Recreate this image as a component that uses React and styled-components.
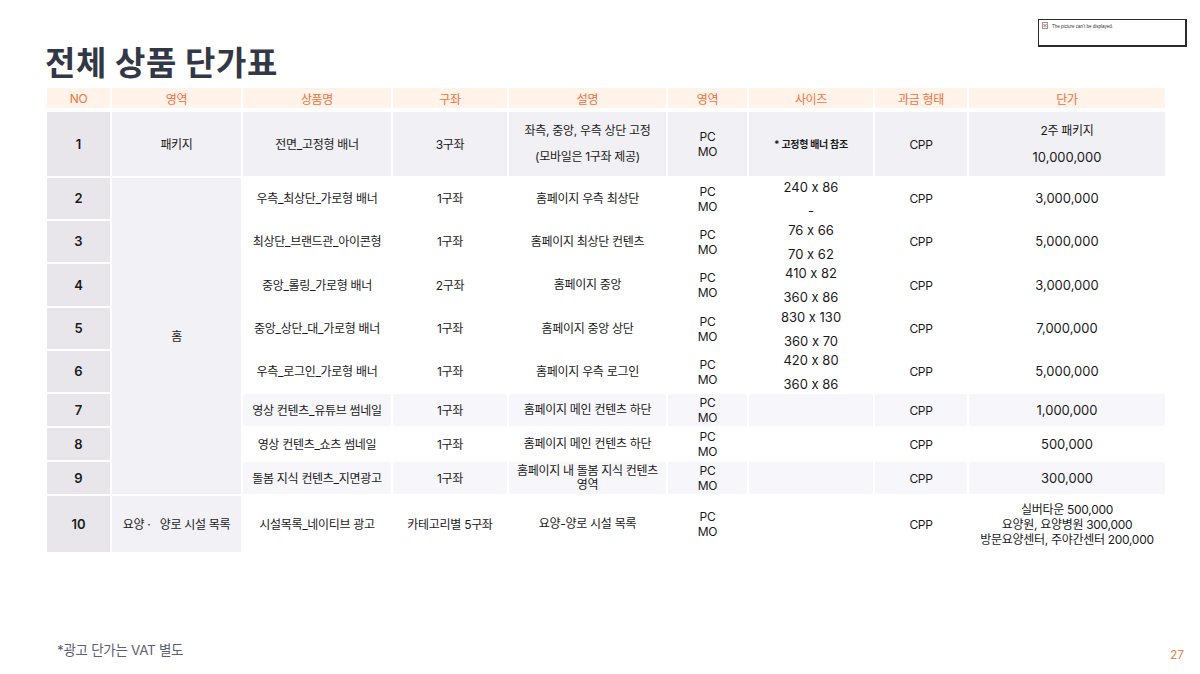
import React from "react";
import styled, { createGlobalStyle } from "styled-components";

const GlobalStyle = createGlobalStyle`
  body {
    margin: 0;
    background: #ffffff;
    font-family: "Inter", "Noto Sans CJK KR", sans-serif;
    font-feature-settings: "calt" 0;
  }
`;

const columns = ["NO", "영역", "상품명", "구좌", "설명", "영역", "사이즈", "과금 형태", "단가"];

const rows = [
  {
    no: "1",
    name: "전면_고정형 배너",
    slots: "3구좌",
    desc: ["좌측, 중앙, 우측 상단 고정", "(모바일은 1구좌 제공)"],
    note: "* 고정형 배너 참조",
    price: ["2주 패키지", "10,000,000"],
    tone: "row",
    height: 64,
  },
  { no: "2", name: "우측_최상단_가로형 배너", slots: "1구좌", desc: ["홈페이지 우측 최상단"], size: ["240 x 86", "-"], price: ["3,000,000"], height: 41 },
  { no: "3", name: "최상단_브랜드관_아이콘형", slots: "1구좌", desc: ["홈페이지 최상단 컨텐츠"], size: ["76 x 66", "70 x 62"], price: ["5,000,000"], height: 41 },
  { no: "4", name: "중앙_롤링_가로형 배너", slots: "2구좌", desc: ["홈페이지 중앙"], size: ["410 x 82", "360 x 86"], price: ["3,000,000"], height: 42 },
  { no: "5", name: "중앙_상단_대_가로형 배너", slots: "1구좌", desc: ["홈페이지 중앙 상단"], size: ["830 x 130", "360 x 70"], price: ["7,000,000"], height: 41 },
  { no: "6", name: "우측_로그인_가로형 배너", slots: "1구좌", desc: ["홈페이지 우측 로그인"], size: ["420 x 80", "360 x 86"], price: ["5,000,000"], height: 41 },
  { no: "7", name: "영상 컨텐츠_유튜브 썸네일", slots: "1구좌", desc: ["홈페이지 메인 컨텐츠 하단"], size: [], price: ["1,000,000"], tone: "soft", height: 32 },
  { no: "8", name: "영상 컨텐츠_쇼츠 썸네일", slots: "1구좌", desc: ["홈페이지 메인 컨텐츠 하단"], size: [], price: ["500,000"], height: 32 },
  { no: "9", name: "돌봄 지식 컨텐츠_지면광고", slots: "1구좌", desc: ["홈페이지 내 돌봄 지식 컨텐츠", "영역"], size: [], price: ["300,000"], tone: "soft", height: 32 },
  {
    no: "10",
    area: "요양 ·   양로 시설 목록",
    name: "시설목록_네이티브 광고",
    slots: "카테고리별 5구좌",
    desc: ["요양-양로 시설 목록"],
    size: [],
    price: ["실버타운 500,000", "요양원, 요양병원 300,000", "방문요양센터, 주야간센터 200,000"],
    height: 56,
  },
];

// numbers only lines are set a bit larger, like the original slide font
const Text = ({ children }) => (
  <Line $num={/^[\d ,x-]+$/.test(children)}>{children}</Line>
);

const App = () => {
  return (
    <>
      <GlobalStyle />
      <Page>
        <BrokenPicture>
          <BrokenIcon>
            <svg width="6" height="7" viewBox="0 0 6 7">
              <rect x="0.5" y="0.5" width="5" height="6" fill="#fff" stroke="#999" />
              <path d="M1.5 2 L4.5 5 M4.5 2 L1.5 5" stroke="#d23" strokeWidth="0.8" />
            </svg>
          </BrokenIcon>
          <span>The picture can't be displayed.</span>
        </BrokenPicture>

        <Title>전체 상품 단가표</Title>

        <HeadGrid>
          {columns.map((col, index) => (
            <HeadCell key={`${col}-${index}`}>{col}</HeadCell>
          ))}
        </HeadGrid>

        <BodyGrid $rows={rows.map((r) => `${r.height}px`).join(" ")}>
          {rows.map((row, index) => (
            <React.Fragment key={row.no}>
              <Cell $tone="no" $bold>
                <Text>{row.no}</Text>
              </Cell>
              {index === 0 && <Cell $tone="row">패키지</Cell>}
              {index === 1 && (
                <Cell $tone="area" $span={8}>
                  홈
                </Cell>
              )}
              {row.area && (
                <Cell $tone="area" $pre>
                  {row.area}
                </Cell>
              )}
              <Cell $tone={row.tone}>{row.name}</Cell>
              <Cell $tone={row.tone}>{row.slots}</Cell>
              <Cell $tone={row.tone} $lh={index === 0 ? 26 : 14}>
                {row.desc.map((line) => (
                  <Text key={line}>{line}</Text>
                ))}
              </Cell>
              <Cell $tone={row.tone}>
                <Text>PC</Text>
                <Text>MO</Text>
              </Cell>
              <Cell $tone={row.tone} $lh={24}>
                {row.note ? (
                  <Note>{row.note}</Note>
                ) : (
                  row.size.map((line) => <Text key={line}>{line}</Text>)
                )}
              </Cell>
              <Cell $tone={row.tone}>CPP</Cell>
              <Cell $tone={row.tone} $lh={index === 0 ? 26 : 15}>
                {row.price.map((line) => (
                  <Text key={line}>{line}</Text>
                ))}
              </Cell>
            </React.Fragment>
          ))}
        </BodyGrid>

        <Footer>
          <FootNote>*광고 단가는 VAT 별도</FootNote>
          <PageNum>27</PageNum>
        </Footer>
      </Page>
    </>
  );
};

const Page = styled.div`
  position: relative;
  box-sizing: border-box;
  width: 1200px;
  height: 674px;
  padding: 40px 0 0 45px;
  display: flex;
  flex-direction: column;
  overflow: hidden;
`;

const BrokenPicture = styled.div`
  position: absolute;
  top: 19px;
  left: 1038px;
  box-sizing: border-box;
  width: 149px;
  height: 28px;
  border: 1px solid #2b2b2b;
  border-right-width: 2px;
  border-bottom-width: 2px;
  padding: 2px 3px;
  display: flex;
  align-items: flex-start;
  gap: 4px;
  font-family: "Liberation Sans", sans-serif;
  font-size: 4.5px;
  color: #333;

  span {
    margin-top: 2px;
  }
`;

const BrokenIcon = styled.div`
  width: 6px;
  height: 7px;
  display: flex;
`;

const Title = styled.h1`
  margin: 0 0 6px 0;
  font-family: "Noto Sans CJK KR", sans-serif;
  font-size: 33px;
  line-height: 42px;
  font-weight: 700;
  letter-spacing: 0.6px;
  color: #333846;
`;

const gridColumns = "63px 129px 148px 114px 157px 79px 124px 92px 196px";

const HeadGrid = styled.div`
  display: grid;
  grid-template-columns: ${gridColumns};
  column-gap: 2px;
  width: 1118px;
  margin: 0 0 4px 2px;
`;

const HeadCell = styled.div`
  height: 20px;
  display: flex;
  align-items: center;
  justify-content: center;
  background: #fff3ea;
  color: #f2723b;
  font-size: 12px;
  letter-spacing: -0.3px;
`;

const tones = {
  no: "#e8e6ea",
  row: "#f1f0f4",
  area: "#f2f1f5",
  soft: "#f7f7fb",
};

const BodyGrid = styled.div`
  display: grid;
  grid-template-columns: ${gridColumns};
  grid-template-rows: ${(p) => p.$rows};
  gap: 2px;
  width: 1118px;
  margin-left: 2px;
`;

const Cell = styled.div`
  grid-row: ${(p) => (p.$span ? `span ${p.$span}` : "auto")};
  display: flex;
  flex-direction: column;
  align-items: center;
  justify-content: center;
  text-align: center;
  background: ${(p) => tones[p.$tone] || "#ffffff"};
  color: #1a1a1a;
  font-size: 12px;
  line-height: ${(p) => p.$lh || 15}px;
  letter-spacing: -0.3px;
  font-weight: ${(p) => (p.$bold ? 600 : 400)};
  white-space: ${(p) => (p.$pre ? "pre" : "normal")};
`;

const Line = styled.div`
  font-size: ${(p) => (p.$num ? "13px" : "inherit")};
  letter-spacing: ${(p) => (p.$num ? "0" : "inherit")};
`;

const Note = styled.div`
  font-size: 10px;
  font-weight: 700;
  letter-spacing: -0.3px;
`;

const Footer = styled.div`
  margin-top: auto;
  display: flex;
  justify-content: space-between;
  align-items: flex-start;
  padding: 0 16px 11px 12px;
`;

const FootNote = styled.div`
  font-size: 13.5px;
  line-height: 18px;
  color: #5d6170;
  letter-spacing: -0.3px;
`;

const PageNum = styled.div`
  margin-top: 6px;
  font-size: 12px;
  line-height: 16px;
  color: #e8844a;
`;

export default App;
